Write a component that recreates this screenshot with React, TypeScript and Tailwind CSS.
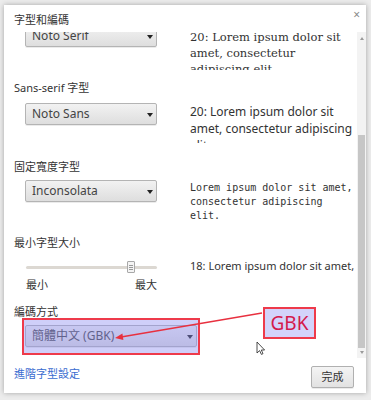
import React from "react";

const ui = "font-['Noto_Sans','Noto_Sans_CJK_TC',sans-serif]";

function Select({ label, width }: { label: string; width: string }) {
  return (
    <div
      className={`relative ${width} h-[22px] shrink-0 rounded-[2px] border border-[#b4b4b4] bg-gradient-to-b from-[#f2f2f2] to-[#dedede] shadow-[0_1px_0_rgba(0,0,0,0.08)] flex items-center pl-[6px] text-[12px] text-[#444] ${ui}`}
    >
      <span className="leading-[20px]">{label}</span>
      <span className="absolute right-[3px] top-[9px] w-0 h-0 border-l-[3px] border-r-[3px] border-t-[4px] border-l-transparent border-r-transparent border-t-[#222]" />
    </div>
  );
}

function Label({ children, className = "" }: { children: React.ReactNode; className?: string }) {
  return (
    <div className={`pl-[10px] h-[18px] leading-[18px] text-[11px] text-[#333] ${ui} ${className}`}>{children}</div>
  );
}

export default function App() {
  return (
    <div className={`relative w-[371px] h-[400px] overflow-hidden bg-[#ececec] pt-[5px] pl-[4px] ${ui}`}>
      <div className="relative w-[362px] h-[388px] bg-white shadow-[0_0_5px_rgba(0,0,0,0.3)] flex flex-col">
        {/* title */}
        <div className="h-[27px] shrink-0 pt-[4px] pl-[10px] flex items-center text-[11px] text-[#333]">字型和編碼</div>
        <div className="absolute right-[6px] top-[3px] text-[12px] leading-[14px] text-[#8a8a8a]">×</div>

        {/* scroll area */}
        <div className="h-[326px] shrink-0 flex">
          <div className="flex-1 overflow-hidden">
            {/* row 1 serif */}
            <div className="mt-[-7px] flex items-start">
              <div className="ml-[21px]">
                <Select label="Noto Serif" width="w-[132px]" />
              </div>
              <div className="ml-[33px] w-[166px] h-[45px] overflow-hidden pt-[4px] leading-[16px] text-[11.5px] text-[#333] font-['DejaVu_Serif',serif]">
                20: Lorem ipsum dolor sit amet, consectetur adipiscing elit.
              </div>
            </div>

            <Label className="mt-[9px]">Sans-serif 字型</Label>
            <div className="mt-[6px] flex items-start">
              <div className="ml-[21px]">
                <Select label="Noto Sans" width="w-[132px]" />
              </div>
              <div className="ml-[33px] w-[166px] h-[40px] overflow-hidden leading-[17px] text-[12px] text-[#333] font-['Noto_Sans',sans-serif]">
                20: Lorem ipsum dolor sit amet, consectetur adipiscing elit.
              </div>
            </div>

            <Label className="mt-[15px]">固定寬度字型</Label>
            <div className="mt-[4px] flex items-start">
              <div className="ml-[21px]">
                <Select label="Inconsolata" width="w-[132px]" />
              </div>
              <div className="ml-[33px] w-[166px] h-[43px] overflow-hidden pt-[1px] leading-[14px] text-[10px] text-[#333] font-['DejaVu_Sans_Mono',monospace]">
                Lorem ipsum dolor sit amet, consectetur adipiscing elit.
              </div>
            </div>

            <Label className="mt-[11px]">最小字型大小</Label>
            <div className="mt-[5px] flex items-start">
              <div className="ml-[21px] w-[132px] shrink-0">
                <div className="relative h-[20px]">
                  <div className="absolute left-[1px] right-0 top-[9px] h-[3px] rounded-full bg-[#dcd8d2]" />
                  <div className="absolute left-[102px] top-[4px] w-[8px] h-[12px] rounded-[1px] border border-[#a8a8a8] bg-[#f4f4f4] flex flex-col items-center justify-center gap-[1px]">
                    <div className="w-[4px] h-px bg-[#999]" />
                    <div className="w-[4px] h-px bg-[#999]" />
                    <div className="w-[4px] h-px bg-[#999]" />
                  </div>
                </div>
                <div className="flex justify-between h-[16px] leading-[16px] text-[11px] text-[#333] pl-[1px]">
                  <span>最小</span>
                  <span>最大</span>
                </div>
              </div>
              <div className="ml-[33px] w-[166px] h-[22px] overflow-hidden leading-[18px] text-[11px] text-[#333] font-['Noto_Sans',sans-serif]">
                18: Lorem ipsum dolor sit amet, consectetur adipiscing elit.
              </div>
            </div>

            <Label className="mt-[10px]">編碼方式</Label>
            <div className="mt-[4px] flex items-start">
              <div className="relative ml-[21px]">
                <Select label="簡體中文 (GBK)" width="w-[172px]" />
                <div className="absolute left-[-3px] top-[-7px] w-[178px] h-[37px] border-2 border-[#ee3a4b] bg-[rgba(140,140,240,0.42)]" />
              </div>
            </div>
          </div>

          {/* scrollbar */}
          <div className="w-[9px] shrink-0 bg-[#f3f3f3] relative flex flex-col items-center">
            <div className="mt-[5px] w-0 h-0 border-l-[2.5px] border-r-[2.5px] border-b-[3px] border-l-transparent border-r-transparent border-b-[#9a9a9a]" />
            <div className="mt-[95px] w-[7px] h-[213px] bg-[#c6c6c6]" />
            <div className="mt-[3px] w-0 h-0 border-l-[2.5px] border-r-[2.5px] border-t-[3px] border-l-transparent border-r-transparent border-t-[#9a9a9a]" />
          </div>
        </div>

        {/* footer */}
        <div className="flex-1 flex items-start justify-between pl-[10px] pr-[12px] pt-[8px]">
          <span className="text-[11px] leading-[16px] text-[#3a6cd0]">進階字型設定</span>
          <button className="w-[43px] h-[22px] rounded-[2px] border border-[#b0b0b0] bg-gradient-to-b from-[#f4f4f4] to-[#e2e2e2] text-[11px] text-[#333] shadow-[0_1px_0_rgba(0,0,0,0.08)]">
            完成
          </button>
        </div>
      </div>

      {/* annotation: GBK box */}
      <div className="absolute left-[263px] top-[307px] w-[53px] h-[32px] border-2 border-[#ee3a4b] bg-[#d3d3fb] flex items-center justify-center text-[19px] text-[#d4194c] font-['Noto_Sans',sans-serif]">
        GBK
      </div>

      {/* annotation arrow + cursor */}
      <svg className="absolute left-0 top-0 pointer-events-none" width="371" height="400">
        <line x1="262" y1="313" x2="121" y2="337" stroke="#e8303f" strokeWidth="1.4" />
        <polygon points="115,338 123.4,340 122.4,333.5" fill="#e8303f" />
        <path
          d="M257 342 L257 353 L259.6 350.6 L261.4 354.4 L263 353.7 L261.3 350 L264.6 350 Z"
          fill="#fff"
          stroke="#222"
          strokeWidth="0.8"
          strokeLinejoin="round"
        />
      </svg>
    </div>
  );
}
